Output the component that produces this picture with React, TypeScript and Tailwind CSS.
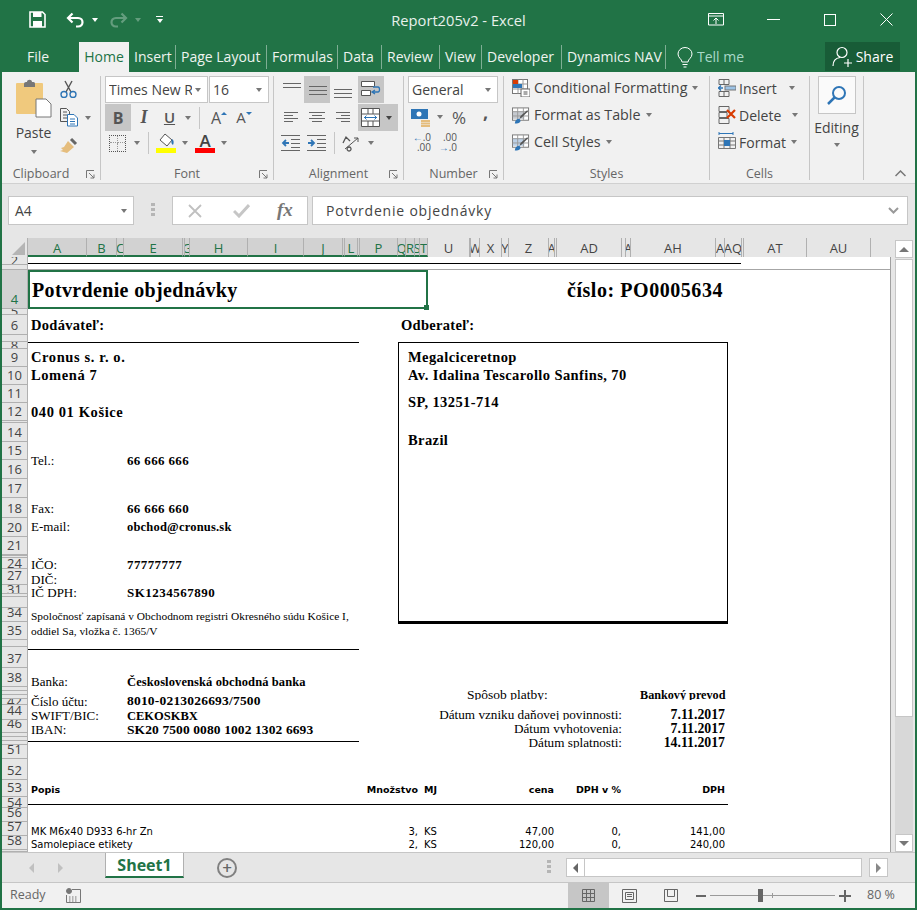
import type { ReactNode } from "react";

const columns: { label: string; w: number; sel?: boolean }[] = [
  { label: "A", w: 59, sel: true }, { label: "B", w: 30, sel: true }, { label: "C", w: 7, sel: true },
  { label: "E", w: 59, sel: true }, { label: "", w: 2, sel: true }, { label: "G", w: 5, sel: true },
  { label: "H", w: 58, sel: true }, { label: "I", w: 56, sel: true }, { label: "J", w: 39, sel: true },
  { label: "", w: 2, sel: true }, { label: "L", w: 13, sel: true }, { label: "", w: 2, sel: true },
  { label: "P", w: 38, sel: true }, { label: "Q", w: 8, sel: true }, { label: "R", w: 9, sel: true },
  { label: "S", w: 5, sel: true }, { label: "T", w: 8, sel: true },
  { label: "U", w: 42 }, { label: "", w: 1 }, { label: "W", w: 9 }, { label: "X", w: 22 }, { label: "Y", w: 7 },
  { label: "Z", w: 40 }, { label: "A", w: 6 }, { label: "", w: 2 }, { label: "AD", w: 65 }, { label: "", w: 4 },
  { label: "A", w: 5 }, { label: "AH", w: 85 }, { label: "A", w: 9 }, { label: "AQ", w: 17 }, { label: "", w: 2 },
  { label: "AT", w: 63 }, { label: "AU", w: 64 },
];

const rowHeads: { n: string; h: number; sel?: boolean }[] = [
  { n: "2", h: 8 }, { n: "", h: 5 }, { n: "4", h: 39, sel: true }, { n: "5", h: 6 }, { n: "6", h: 20 }, { n: "", h: 7 }, { n: "8", h: 7 },
  { n: "9", h: 18 }, { n: "10", h: 18 }, { n: "11", h: 18 }, { n: "12", h: 18 }, { n: "", h: 2 },
  { n: "14", h: 19 }, { n: "15", h: 18 }, { n: "16", h: 19 }, { n: "17", h: 19 }, { n: "18", h: 20 },
  { n: "20", h: 19 }, { n: "21", h: 18 }, { n: "", h: 1 }, { n: "", h: 2 }, { n: "24", h: 11 },
  { n: "27", h: 16 }, { n: "31", h: 9 }, { n: "", h: 3 }, { n: "", h: 11 }, { n: "34", h: 14 },
  { n: "35", h: 18 }, { n: "", h: 7 }, { n: "37", h: 21 }, { n: "38", h: 19 }, { n: "", h: 4 },
  { n: "", h: 4 }, { n: "", h: 4 }, { n: "42", h: 6 }, { n: "44", h: 15 }, { n: "46", h: 13 },
  { n: "", h: 4 }, { n: "", h: 4 }, { n: "", h: 4 }, { n: "51", h: 14 }, { n: "52", h: 21 },
  { n: "53", h: 17 }, { n: "54", h: 11 }, { n: "56", h: 14 }, { n: "57", h: 14 }, { n: "58", h: 14 }, { n: "", h: 2 },
];

function Caret({ className = "", dark = false }: { className?: string; dark?: boolean }) {
  return (
    <span
      className={
        "inline-block h-0 w-0 border-x-[3.5px] border-t-[4px] border-x-transparent " +
        (dark ? "border-t-[#444] " : "border-t-[#777] ") +
        className
      }
    />
  );
}

function Lines({ rows, w = 18, h = 16 }: { rows: number[][]; w?: number; h?: number }) {
  return (
    <svg width={w} height={h} viewBox={`0 0 ${w} ${h}`} stroke="#666" strokeWidth="1">
      {rows.map((r, i) => (
        <line key={i} x1={r[0]} x2={r[1]} y1={r[2] + 0.5} y2={r[2] + 0.5} />
      ))}
    </svg>
  );
}

function Group({
  label,
  launcher,
  width,
  labelClass = "",
  children,
}: {
  label: string;
  launcher?: boolean;
  width: string;
  labelClass?: string;
  children: ReactNode;
}) {
  return (
    <div className={"relative flex h-full shrink-0 flex-col border-r border-[#c6c6c6] " + width}>
      <div className="min-h-0 flex-1">{children}</div>
      <div className={"h-[15px] pt-[1px] text-center text-[12.5px] leading-[15px] text-[#666] " + labelClass}>{label}</div>
      {launcher && (
        <svg className="absolute bottom-[1px] right-[5px]" width="9" height="9" viewBox="0 0 9 9" fill="none" stroke="#777">
          <path d="M.5 8V.5H8M3 3l5 5M8 4.5V8H4.5" />
        </svg>
      )}
    </div>
  );
}

function Slot({ className = "", children }: { className?: string; children?: ReactNode }) {
  return <span className={"flex h-[27px] shrink-0 items-center justify-center " + className}>{children}</span>;
}

function SelectBox({ text, className }: { text: string; className: string }) {
  return (
    <div className={"flex h-[27px] items-center justify-between overflow-hidden border border-[#c6c6c6] bg-white pl-[3px] pr-[6px] text-[14px] text-[#444] " + className}>
      <span className="overflow-hidden whitespace-nowrap">{text}</span>
      <Caret className="ml-[3px] shrink-0" />
    </div>
  );
}

function StyleItem({ icon, text }: { icon: ReactNode; text: string }) {
  return (
    <div className="flex h-[27px] items-center pb-[3px] pl-[8px] text-[14.3px] text-[#444]">
      <span className="mr-[4px] flex w-[18px] justify-center">{icon}</span>
      {text}
      <Caret className="ml-[5px]" />
    </div>
  );
}

function CellItem({ icon, text, caretGap }: { icon: ReactNode; text: string; caretGap: string }) {
  return (
    <div className="flex h-[27px] items-center pb-[3px] pl-[8px] text-[14px] text-[#444]">
      <span className="mr-[3px] flex w-[18px] justify-center">{icon}</span>
      {text}
      <Caret className={caretGap} />
    </div>
  );
}

const tableIcon = (fill: string) => (
  <svg width="19" height="19" viewBox="0 0 19 19" fill="none">
    <rect x=".5" y="1.5" width="17" height="13" stroke="#777" fill="#fff" />
    <rect x="1" y="5" width="12" height="8" fill={fill} />
    <path d="M.5 5.5h17M.5 10h17M6 1.5v13M12 1.5v13" stroke="#999" />
    <path d="M17 5l-7 7-2 1 1-3 7-6z" fill="#555" />
    <path d="M3 18c0-3 2-5 5-5l1 2c0 2-3 3-6 3z" fill="#2e75b6" />
  </svg>
);

function TitleBar() {
  return (
    <div className="grid h-[42px] shrink-0 grid-cols-[1fr_auto_1fr] items-center text-white">
      <div className="flex items-center pb-[3px]">
        <svg className="ml-[27px]" width="17" height="17" viewBox="0 0 17 17" fill="none">
          <path d="M1 1h12.5L16 3.5V16H1z" stroke="#fff" strokeWidth="1.6" />
          <rect x="4" y="1" width="8.5" height="5" fill="#fff" />
          <rect x="4" y="10" width="9" height="6" fill="#fff" />
        </svg>
        <svg className="ml-[20px]" width="19" height="16" viewBox="0 0 19 16" fill="none" stroke="#fff" strokeWidth="2.2">
          <path d="M6.5 1.5L2 6l4.5 4.5M2 6h10c6 0 6 8.500 0 8.500h-2" />
        </svg>
        <Caret className="ml-[7px] !border-t-white" />
        <svg className="ml-[11px] opacity-30" width="19" height="16" viewBox="0 0 19 16" fill="none" stroke="#fff" strokeWidth="2.2">
          <path d="M12.500 1.500L17 6l-4.500 4.500M17 6H7c-6 0-6 8.500 0 8.500h2" />
        </svg>
        <Caret className="ml-[7px] opacity-30 !border-t-white" />
        <span className="ml-[15px] flex flex-col items-center gap-[2px]">
          <span className="h-px w-[7px] bg-white" />
          <Caret className="!border-t-white" />
        </span>
      </div>
      <div className="pb-[2px] text-[14.7px] text-[#e8f1ec]">Report205v2 - Excel</div>
      <div className="flex items-center justify-end pb-[3px]">
        <svg width="16" height="13" viewBox="0 0 16 13" fill="none" stroke="#fff">
          <path d="M.5.500h15v11.500H.5zM.5 3h15M8 11V5M5.500 7.500L8 5l2.500 2.500" />
        </svg>
        <span className="ml-[43px] h-px w-[13px] bg-white" />
        <span className="ml-[44px] h-[12px] w-[12px] border border-white" />
        <svg className="ml-[44px] mr-[22px]" width="13" height="13" viewBox="0 0 13 13" stroke="#fff">
          <path d="M.5.500l12 12M12.500.500l-12 12" />
        </svg>
      </div>
    </div>
  );
}

function TabBar() {
  const tabs: [string, string][] = [
    ["Insert", "w-[47px]"],
    ["Page Layout", "w-[91px]"],
    ["Formulas", "w-[71px]"],
    ["Data", "w-[44px]"],
    ["Review", "w-[58px]"],
    ["View", "w-[42px]"],
    ["Developer", "w-[80px]"],
    ["Dynamics NAV", "w-[104px]"],
  ];
  return (
    <div className="flex h-[30px] shrink-0 items-stretch text-[14px] text-[#eef4f0]">
      <div className="flex w-[77px] items-center pb-[1px] pl-[25px]">File</div>
      <div className="flex w-[50px] items-center justify-center bg-[#f1f1f1] pb-[1px] text-[#217346]">Home</div>
      {tabs.map(([t, w]) => (
        <div key={t} className={"my-[3px] flex items-center justify-start overflow-hidden whitespace-nowrap border-r border-[#7fae94] pb-[2px] pl-[5px] " + w}>
          {t}
        </div>
      ))}
      <svg className="ml-[11px] mt-[5px]" width="16" height="21" viewBox="0 0 16 21" fill="none" stroke="#fff">
        <path d="M5 15c0-3-4-4-4-8a7 6.500 0 0 1 14 0c0 4-4 5-4 8zM5.500 17.500h5M6.500 20h3" />
      </svg>
      <div className="ml-[4px] flex w-[48px] items-center overflow-hidden whitespace-nowrap pb-[1px] text-[#a9d9c9]">Tell me</div>
      <div className="ml-[80px] flex h-[29px] w-[75px] items-center justify-center gap-[3px] bg-[#185c37] text-white">
        <svg width="21" height="21" viewBox="0 0 21 21" fill="none" stroke="#fff" strokeWidth="1.2">
          <circle cx="10" cy="6.500" r="5" />
          <path d="M1 20c0-5 3-8 7-8.500M12 17h8M16 13v8" />
        </svg>
        Share
      </div>
    </div>
  );
}

function Ribbon() {
  return (
    <div className="flex h-[112px] shrink-0 border-b border-[#d0d0d0] bg-[#f1f1f1] pb-[3px] pt-[4px] font-['Open_Sans',sans-serif]">
      <Group label="Clipboard" launcher width="w-[99px]" labelClass="pr-[20px]">
        <div className="flex h-full">
          <div className="flex w-[58px] shrink-0 flex-col items-center pl-[5px]">
            <svg className="mt-[3px] shrink-0" width="36" height="39" viewBox="0 0 36 39" fill="none">
              <rect x="0" y="4" width="27" height="31" rx="1" fill="#f0c97d" />
              <path d="M8 5c0-2 2-2 3-2 0-3 5-3 5 0 2 0 3 0 3 2v3H8z" fill="#777" />
              <path d="M20 20h10l5 5v13H20z" fill="#fff" stroke="#777" />
            </svg>
            <span className="mt-[6px] text-[14px] leading-[18px] text-[#444]">Paste</span>
            <Caret className="mt-[8px]" />
          </div>
          <div className="flex shrink-0 flex-col items-start pt-[4px]">
            <svg width="17" height="18" viewBox="0 0 17 18" fill="none" stroke="#555">
              <path d="M5 1l6 11M12 1L6 12" strokeWidth="1.4" />
              <circle cx="4" cy="14.500" r="3" stroke="#2e75b6" strokeWidth="1.4" />
              <circle cx="13" cy="14.500" r="3" stroke="#2e75b6" strokeWidth="1.4" />
            </svg>
            <div className="mt-[10px] flex items-center">
              <svg width="18" height="19" viewBox="0 0 18 19" fill="none" stroke="#555">
                <path d="M.5.500h6l3 3v10h-9zM3 4h4M3 7h4M3 10h4" />
                <path d="M7.500 6.500H14l3.500 3.500v8h-10z" fill="#fff" stroke="#2e75b6" />
                <path d="M10 11h5M10 13.500h5M10 16h5" stroke="#2e75b6" />
              </svg>
              <Caret className="ml-[7px]" />
            </div>
            <svg className="mt-[10px]" width="18" height="17" viewBox="0 0 18 17" fill="none">
              <path d="M11 2l5 5" stroke="#666" strokeWidth="3" />
              <path d="M8 4l6 6-7 6-7-2 3-1-2-2 3-1z" fill="#e5bd7d" />
            </svg>
          </div>
        </div>
      </Group>

      <Group label="Font" launcher width="w-[173px]">
        <div className="flex gap-[1px] pl-[4px] font-['Open_Sans',sans-serif]">
          <SelectBox text="Times New R" className="w-[103px]" />
          <SelectBox text="16" className="w-[60px]" />
        </div>
        <div className="flex items-center pl-[4px] pt-[1px] text-[#555]">
          <Slot className="w-[26px] bg-[#c6c6c6] text-[16px] font-bold">B</Slot>
          <Slot className="w-[26px] font-['Liberation_Serif',serif] text-[18px] font-bold italic">I</Slot>
          <Slot className="w-[25px] text-[15px] font-semibold underline">U</Slot>
          <Caret className="ml-[3px]" />
          <span className="ml-[8px] h-[22px] w-px bg-[#c6c6c6]" />
          <Slot className="ml-[9px] w-[20px] text-[16px]">
            A<span className="mb-[9px] h-0 w-0 border-x-[3px] border-b-[3px] border-x-transparent border-b-[#2e75b6]" />
          </Slot>
          <Slot className="ml-[5px] w-[20px] text-[15px]">
            A<span className="mb-[9px] h-0 w-0 border-x-[3px] border-t-[3px] border-x-transparent border-t-[#2e75b6]" />
          </Slot>
        </div>
        <div className="flex h-[20px] items-center pl-[8px] pt-[4px]">
          <span className="grid h-[17px] w-[17px] grid-cols-2 grid-rows-2 border border-dotted border-[#555]">
            <span className="border-b border-r border-dotted border-[#999]" />
            <span className="border-b border-dotted border-[#999]" />
            <span className="border-r border-dotted border-[#999]" />
          </span>
          <Caret className="ml-[8px]" />
          <span className="ml-[8px] h-[22px] w-px bg-[#c6c6c6]" />
          <span className="ml-[7px] flex w-[20px] flex-col items-center">
            <svg width="18" height="15" viewBox="0 0 18 15" fill="none">
              <path d="M8 1l7 6-5 6-7-6z" stroke="#555" fill="#fff" />
              <path d="M15 6c2 1 2 4 1 6-2-1-2-4-1-6z" fill="#2e75b6" />
            </svg>
            <span className="h-[5px] w-[20px] bg-[#ffff00]" />
          </span>
          <Caret className="ml-[6px]" />
          <span className="ml-[7px] flex w-[20px] flex-col items-center">
            <span className="h-[15px] text-[17px] font-semibold leading-[15px] text-[#444]">A</span>
            <span className="h-[5px] w-[20px] bg-[#ff0000]" />
          </span>
          <Caret className="ml-[6px]" />
        </div>
      </Group>

      <Group label="Alignment" launcher width="w-[130px]">
        <div className="flex pl-[4px]">
          <Slot className="w-[26px]"><Lines w={19} h={18} rows={[[1, 19, 2], [1, 19, 6]]} /></Slot>
          <Slot className="w-[26px] bg-[#c6c6c6]"><Lines w={19} h={18} rows={[[1, 19, 5], [1, 19, 9], [1, 19, 13]]} /></Slot>
          <Slot className="w-[25px]"><Lines w={19} h={18} rows={[[1, 19, 8], [1, 19, 12], [1, 19, 16]]} /></Slot>
          <Slot className="ml-[3px] w-[26px] bg-[#c6c6c6]">
            <svg width="20" height="19" viewBox="0 0 20 19" fill="none">
              <path d="M.5 1.500h13v5h-13zM.5 10.500h9v5h-9z" fill="#fff" stroke="#555" />
              <path d="M12 7h5c2 0 2 5 0 5h-5M14 10l-3 2 3 2" stroke="#2e75b6" strokeWidth="1.3" />
            </svg>
          </Slot>
        </div>
        <div className="flex pl-[4px] pt-[1px]">
          <Slot className="w-[26px]"><Lines w={15} h={13} rows={[[0, 14, 1], [0, 9, 4], [0, 14, 7], [0, 9, 10]]} /></Slot>
          <Slot className="w-[26px]"><Lines w={16} h={13} rows={[[0, 16, 1], [3, 13, 4], [0, 16, 7], [3, 13, 10]]} /></Slot>
          <Slot className="w-[25px]"><Lines w={15} h={13} rows={[[1, 15, 1], [6, 15, 4], [1, 15, 7], [6, 15, 10]]} /></Slot>
          <Slot className="ml-[3px] w-[40px] justify-start bg-[#c6c6c6] pl-[3px]">
            <svg width="19" height="19" viewBox="0 0 19 19" fill="none">
              <path d="M.5.500h18v18H.5z" fill="#fff" stroke="#555" />
              <path d="M.5 6h18M.5 13h18M7 .500V6M12 .500V6M7 13v5M12 13v5" stroke="#555" />
              <path d="M3 9.500h13M5.500 7.500l-2 2 2 2M13.500 7.500l2 2-2 2" stroke="#2e75b6" />
            </svg>
            <Caret dark className="ml-[6px]" />
          </Slot>
        </div>
        <div className="flex h-[20px] items-center pl-[7px] pt-[4px]">
          <svg width="19" height="16" viewBox="0 0 19 16" fill="none">
            <path d="M0 .500h19M10 4.500h9M10 8.500h9M10 12.500h9M0 15.500h19" stroke="#666" />
            <path d="M8 8H2M5 5L2 8l3 3" stroke="#2e75b6" strokeWidth="1.8" />
          </svg>
          <svg className="ml-[7px]" width="19" height="16" viewBox="0 0 19 16" fill="none">
            <path d="M0 .500h19M10 4.500h9M10 8.500h9M10 12.500h9M0 15.500h19" stroke="#666" />
            <path d="M1 8h6M4 5l3 3-3 3" stroke="#2e75b6" strokeWidth="1.8" />
          </svg>
          <span className="ml-[8px] h-[22px] w-px bg-[#c6c6c6]" />
          <svg className="ml-[7px]" width="19" height="17" viewBox="0 0 19 17" fill="none" stroke="#555">
            <path d="M3 14L16 3M12 3h4v4" />
            <path d="M1 8l3-6 4 4M7 12a2 2 0 1 0 .1 0z" strokeWidth="1.3" />
          </svg>
          <Caret className="ml-[7px]" />
        </div>
      </Group>

      <Group label="Number" launcher width="w-[100px]">
        <div className="pl-[4px]">
          <SelectBox text="General" className="w-[90px]" />
        </div>
        <div className="flex h-[27px] items-center pl-[7px] pt-[1px] text-[#555]">
          <svg width="20" height="19" viewBox="0 0 20 19" fill="none">
            <rect x="0" y="1" width="17" height="10" fill="#2e75b6" />
            <circle cx="8" cy="6" r="2.500" fill="#fff" />
            <path d="M10 13h9M10 15.500h9M10 18h9" stroke="#e5bd7d" strokeWidth="2" />
          </svg>
          <Caret className="ml-[6px]" />
          <span className="ml-[9px] text-[17px] leading-none">%</span>
          <span className="mb-[10px] ml-[17px] text-[18px] font-bold leading-none">,</span>
        </div>
        <div className="flex h-[20px] items-center gap-[8px] pl-[9px] pt-[4px] text-[10px] leading-[10px] text-[#555]">
          <span className="flex w-[18px] flex-col items-end">
            <span><span className="font-bold text-[#2e75b6]">←</span>.0</span>
            <span>.00</span>
          </span>
          <span className="flex w-[18px] flex-col items-end">
            <span>.00</span>
            <span><span className="font-bold text-[#2e75b6]">→</span>.0</span>
          </span>
        </div>
      </Group>

      <Group label="Styles" width="w-[206px]">
        <StyleItem
          text="Conditional Formatting"
          icon={
            <svg width="18" height="18" viewBox="0 0 18 18" fill="none">
              <rect x=".5" y=".500" width="15" height="14" stroke="#777" fill="#fff" />
              <path d="M.5 5h15M.5 10h15M6 .500v14M11 .500v14" stroke="#999" />
              <rect x="1" y="1" width="5" height="4" fill="#d83b01" />
              <rect x="1" y="5" width="9" height="4" fill="#2e75b6" />
              <rect x="9" y="10" width="9" height="8" fill="#fff" stroke="#666" />
              <path d="M11.500 13h4M11.500 15h4" stroke="#555" />
            </svg>
          }
        />
        <StyleItem text="Format as Table" icon={tableIcon("#c5c9cf")} />
        <StyleItem text="Cell Styles" icon={tableIcon("#bcd0e6")} />
      </Group>

      <Group label="Cells" width="w-[100px]">
        <CellItem
          text="Insert"
          caretGap="ml-[12px]"
          icon={
            <svg width="18" height="18" viewBox="0 0 18 18" fill="none" stroke="#666">
              <path d="M1 .500h10v5H1zM1 12.500h10v5H1zM6 .500v5M6 12.500v5" />
              <rect x="7" y="7" width="11" height="4" fill="#9dc3e6" stroke="#777" />
              <path d="M5 9H0M3 6.500L.5 9 3 11.500" stroke="#2e75b6" strokeWidth="1.3" />
            </svg>
          }
        />
        <CellItem
          text="Delete"
          caretGap="ml-[11px]"
          icon={
            <svg width="18" height="18" viewBox="0 0 18 18" fill="none" stroke="#666">
              <path d="M1 .500h10v5H1zM1 12.500h10v5H1zM1 6.500h8v5H1z" />
              <path d="M9 4l8 8M17 4l-8 8" stroke="#d83b01" strokeWidth="2.200" />
            </svg>
          }
        />
        <CellItem
          text="Format"
          caretGap="ml-[5px]"
          icon={
            <svg width="18" height="20" viewBox="0 0 18 20" fill="none">
              <path d="M1 1.500h14M1 0v3M15 0v3" stroke="#2e75b6" />
              <path d="M.5 5.500h17v11H.5zM.5 9h17M.5 13h17M6 5.500v11M12 5.500v11" stroke="#777" />
              <rect x="6" y="8" width="6" height="6" fill="#2e75b6" />
            </svg>
          }
        />
      </Group>

      <Group label="" width="w-[54px]">
        <div className="flex flex-col items-center">
          <div className="flex h-[38px] w-[38px] items-center justify-center border border-[#c6c6c6] bg-[#fafafa]">
            <svg width="21" height="21" viewBox="0 0 21 21" fill="none" stroke="#2e75b6" strokeWidth="2">
              <circle cx="13" cy="8" r="6" />
              <path d="M8.500 12.500L2 19" strokeWidth="2.500" />
            </svg>
          </div>
          <span className="mt-[5px] text-[14px] leading-[18px] text-[#444]">Editing</span>
          <Caret className="mt-[6px]" />
        </div>
      </Group>

      <div className="flex flex-1 items-end justify-end pb-[3px] pr-[9px]">
        <svg width="11" height="7" viewBox="0 0 11 7" fill="none" stroke="#777" strokeWidth="1.500">
          <path d="M.5 6l5-5 5 5" />
        </svg>
      </div>
    </div>
  );
}

function FormulaBar() {
  return (
    <div className="flex h-[54px] shrink-0 items-start bg-[#e6e6e6] pt-[12px] font-['Open_Sans',sans-serif]">
      <div className="ml-[6px] flex h-[29px] w-[126px] items-center justify-between border border-[#c6c6c6] bg-white pl-[6px] pr-[6px] text-[14px] text-[#444]">
        A4
        <Caret />
      </div>
      <div className="ml-[17px] mt-[7px] flex flex-col gap-[2px]">
        <span className="h-[3px] w-[4px] bg-[#b5b5b5]" />
        <span className="h-[3px] w-[4px] bg-[#b5b5b5]" />
        <span className="h-[3px] w-[4px] bg-[#b5b5b5]" />
      </div>
      <div className="ml-[17px] flex h-[29px] w-[136px] items-center border border-[#c6c6c6] bg-white">
        <svg className="ml-[15px]" width="14" height="14" viewBox="0 0 14 14" stroke="#c0c0c0" strokeWidth="1.800">
          <path d="M1 1l12 12M13 1L1 13" />
        </svg>
        <svg className="ml-[31px]" width="17" height="14" viewBox="0 0 17 14" fill="none" stroke="#c6c6c6" strokeWidth="3">
          <path d="M1 7l5 5L16 1" />
        </svg>
        <span className="ml-[27px] font-['Liberation_Serif',serif] text-[19px] font-bold italic text-[#777]">fx</span>
      </div>
      <div className="ml-[4px] flex h-[29px] w-[596px] items-center justify-between border border-[#c6c6c6] bg-white pl-[13px] pr-[8px] text-[14px] text-[#444]">
        <span className="tracking-[0.8px]">Potvrdenie objednávky</span>
        <svg width="11" height="7" viewBox="0 0 11 7" fill="none" stroke="#999" strokeWidth="2">
          <path d="M1 1l4.500 4.500L10 1" />
        </svg>
      </div>
    </div>
  );
}

function ColumnHeaders() {
  return (
    <div className="flex h-[19px] shrink-0 items-stretch text-[13px] font-['Open_Sans',sans-serif] leading-[19px]">
      <div className="relative w-[26px] shrink-0 border-r border-[#b0b0b0]">
        <span className="absolute bottom-[2px] right-[2px] h-0 w-0 border-b-[13px] border-l-[13px] border-b-[#b5b5b5] border-l-transparent" />
      </div>
      {columns.map((c, i) => (
        <div
          key={i}
          style={{ width: c.w }}
          className={
            "flex shrink-0 justify-center overflow-hidden whitespace-nowrap border-r border-[#b0b0b0] pt-[1px] " +
            (c.sel ? "border-b-2 border-b-[#217346] bg-[#d2d2d2] text-[#217346]" : "text-[#444]")
          }
        >
          {c.label}
        </div>
      ))}
    </div>
  );
}

function RowHeaders() {
  return (
    <div className="w-[26px] shrink-0 font-['Open_Sans',sans-serif] text-[13px] text-[#444]">
      {rowHeads.map((r, i) => (
        <div
          key={i}
          style={{ height: r.h }}
          className={
            "flex justify-center overflow-hidden border-b border-r border-[#b0b0b0] leading-[17px] " +
            (r.h > 12 ? "items-end " : "items-center ") +
            (r.sel ? "bg-[#d2d2d2] text-[#217346]" : "bg-[#e6e6e6]")
          }
        >
          {r.n}
        </div>
      ))}
    </div>
  );
}

function Field({ h, label, value, valueClass = "text-[13px] tracking-[0.35px]" }: { h: string; label: string; value?: string; valueClass?: string }) {
  return (
    <div className={"flex items-center whitespace-nowrap pl-[3px] text-[13px] " + h}>
      <span className="w-[96px] shrink-0">{label}</span>
      {value && <span className={"font-bold " + valueClass}>{value}</span>}
    </div>
  );
}

function DateRow({ label, value }: { label: string; value: string }) {
  return (
    <div className="flex h-[13px] items-baseline justify-end overflow-hidden whitespace-nowrap leading-[15px]">
      <span className="text-[13.2px]">{label}</span>
      <span className="w-[103px] text-right text-[13.8px] font-bold">{value}</span>
    </div>
  );
}

function Document() {
  return (
    <div className="h-[595px] w-[863px] shrink-0 overflow-hidden border-r border-[#a0a0a0] bg-white font-['Liberation_Serif',serif] text-black">
      <div className="mt-[6px] h-px w-[713px] bg-black" />
      <div className="mt-[5px] h-px bg-[#a6a6a6]" />

      <div className="flex h-[39px]">
        <div className="relative flex w-[400px] items-center border-2 border-[#217346] pl-[2px] text-[20px] font-bold tracking-[0.35px]">
          Potvrdenie objednávky
          <span className="absolute -bottom-[3px] -right-[3px] h-[5px] w-[5px] bg-[#217346]" />
        </div>
        <div className="flex w-[295px] items-center justify-end text-[20px] font-bold tracking-[0.55px]">číslo: PO0005634</div>
      </div>

      <div className="mt-[7px] flex h-[20px] items-center text-[14.5px] font-bold tracking-[0.3px]">
        <span className="w-[373px] pl-[3px]">Dodávateľ:</span>
        <span>Odberateľ:</span>
      </div>

      <div className="mt-[6px] flex h-[438px]">
        <div className="w-[370px] shrink-0">
          <div className="h-px w-[331px] bg-black" />
          <div className="mt-[6px] pl-[3px] text-[14.5px] font-bold tracking-[0.6px]">
            <div className="flex h-[18px] items-center">Cronus s. r. o.</div>
            <div className="flex h-[18px] items-center">Lomená 7</div>
            <div className="mt-[19px] flex h-[18px] items-center">040 01 Košice</div>
          </div>
          <Field h="mt-[30px] h-[18px]" label="Tel.:" value="66 666 666" />
          <Field h="mt-[30px] h-[18px]" label="Fax:" value="66 666 660" />
          <Field h="h-[18px]" label="E-mail:" value="obchod@cronus.sk" valueClass="text-[12.5px] tracking-[0.2px]" />
          <Field h="mt-[21px] h-[16px]" label="IČO:" value="77777777" valueClass="text-[13px] tracking-[0.4px]" />
          <Field h="h-[13px]" label="DIČ:" />
          <Field h="h-[14px]" label="IČ DPH:" value="SK1234567890" valueClass="text-[13px] tracking-[0.5px]" />
          <div className="mt-[9px] pl-[3px] text-[11.4px] leading-[15px]">
            <div className="whitespace-nowrap">Spoločnosť zapísaná v Obchodnom registri Okresného súdu Košice I,</div>
            <div className="whitespace-nowrap">oddiel Sa, vložka č. 1365/V</div>
          </div>
          <div className="mt-[10px] h-px w-[331px] bg-black" />
          <Field h="mt-[23px] h-[18px]" label="Banka:" value="Československá obchodná banka" valueClass="text-[12.5px] tracking-[0.1px]" />
          <Field h="mt-[3px] h-[15px]" label="Číslo účtu:" value="8010-0213026693/7500" valueClass="text-[13.5px] tracking-[0.2px]" />
          <Field h="h-[14px]" label="SWIFT/BIC:" value="CEKOSKBX" valueClass="text-[12.5px]" />
          <Field h="h-[14px]" label="IBAN:" value="SK20 7500 0080 1002 1302 6693" valueClass="text-[13.5px] tracking-[0.1px]" />
          <div className="mt-[4px] h-px w-[331px] bg-black" />
        </div>

        <div className="w-[330px] shrink-0">
          <div className="h-[282px] border-x border-b-[3px] border-t border-black pl-[9px] pt-[6px] text-[14.5px] font-bold tracking-[0.4px]">
            <div className="flex h-[18px] items-center">Megalciceretnop</div>
            <div className="flex h-[18px] items-center">Av. Idalina Tescarollo Sanfins, 70</div>
            <div className="mt-[9px] flex h-[18px] items-center">SP, 13251-714</div>
            <div className="mt-[20px] flex h-[18px] items-center">Brazil</div>
          </div>
          <div className="mt-[63px] flex h-[13px] items-baseline overflow-hidden whitespace-nowrap pl-[69px] leading-[15px]">
            <span className="w-[173px] text-[13.5px]">Spôsob platby:</span>
            <span className="text-[12.2px] font-bold">Bankový prevod</span>
          </div>
          <div className="mt-[7px] flex flex-col gap-[1px] pr-[3px]">
            <DateRow label="Dátum vzniku daňovej povinnosti:" value="7.11.2017" />
            <DateRow label="Dátum vyhotovenia:" value="7.11.2017" />
            <DateRow label="Dátum splatnosti:" value="14.11.2017" />
          </div>
        </div>
      </div>

      <div className="flex h-[20px] items-center font-['DejaVu_Sans',sans-serif] text-[9.5px] font-bold">
        <span className="w-[300px] pl-[3px]">Popis</span>
        <span className="w-[90px] text-right">Množstvo</span>
        <span className="w-[40px] pl-[6px]">MJ</span>
        <span className="w-[96px] text-right">cena</span>
        <span className="w-[67px] text-right">DPH v %</span>
        <span className="w-[104px] text-right">DPH</span>
      </div>
      <div className="mt-[4px] h-px w-[700px] bg-black" />
      <div className="mt-[20px] font-['DejaVu_Sans',sans-serif] text-[10px] leading-[13px]">
        <div className="flex">
          <span className="w-[300px] whitespace-nowrap pl-[3px]">MK M6x40 D933 6-hr Zn</span>
          <span className="w-[90px] text-right">3,</span>
          <span className="w-[40px] pl-[6px]">KS</span>
          <span className="w-[96px] text-right">47,00</span>
          <span className="w-[67px] text-right">0,</span>
          <span className="w-[104px] text-right">141,00</span>
        </div>
        <div className="flex">
          <span className="w-[300px] whitespace-nowrap pl-[3px]">Samolepiace etikety</span>
          <span className="w-[90px] text-right">2,</span>
          <span className="w-[40px] pl-[6px]">KS</span>
          <span className="w-[96px] text-right">120,00</span>
          <span className="w-[67px] text-right">0,</span>
          <span className="w-[104px] text-right">240,00</span>
        </div>
      </div>
    </div>
  );
}

function ScrollButton({ dir }: { dir: "up" | "down" }) {
  return (
    <div className="flex h-[18px] w-[18px] shrink-0 items-center justify-center border border-[#c6c6c6] bg-white">
      <span
        className={
          "h-0 w-0 border-x-[5px] border-x-transparent " +
          (dir === "up" ? "border-b-[5px] border-b-[#777]" : "border-t-[5px] border-t-[#777]")
        }
      />
    </div>
  );
}

function SheetArea() {
  return (
    <div className="flex h-[614px] shrink-0 bg-[#e6e6e6]">
      <div className="w-[893px] shrink-0">
        <ColumnHeaders />
        <div className="flex">
          <RowHeaders />
          <Document />
        </div>
      </div>
      <div className="flex w-[18px] flex-col pt-[2px]">
        <ScrollButton dir="up" />
        <div className="mt-[1px] h-[458px] shrink-0 border border-[#c6c6c6] bg-white" />
        <div className="flex-1 bg-[#d8d8d8]" />
        <ScrollButton dir="down" />
      </div>
    </div>
  );
}

function SheetTabs() {
  return (
    <div className="flex h-[30px] shrink-0 border-t border-[#c6c6c6] bg-[#e6e6e6] font-['Open_Sans',sans-serif]">
      <div className="flex h-full items-center pl-[27px]">
        <span className="h-0 w-0 border-y-[5px] border-r-[5px] border-y-transparent border-r-[#c0c0c0]" />
        <span className="ml-[24px] h-0 w-0 border-y-[5px] border-l-[5px] border-y-transparent border-l-[#c0c0c0]" />
      </div>
      <div className="ml-[42px] flex h-[25px] w-[79px] items-center justify-center border-b-2 border-x border-b-[#217346] border-x-[#b0b0b0] bg-white text-[16px] font-bold text-[#217346]">
        Sheet1
      </div>
      <div className="ml-[33px] mt-[5px] flex h-[20px] w-[20px] items-center justify-center rounded-full border-2 border-[#808080] pb-[2px] text-[17px] font-semibold leading-none text-[#666]">
        +
      </div>
      <div className="ml-[310px] mt-[7px] flex flex-col gap-[2px]">
        <span className="h-[3px] w-[4px] bg-[#b5b5b5]" />
        <span className="h-[3px] w-[4px] bg-[#b5b5b5]" />
        <span className="h-[3px] w-[4px] bg-[#b5b5b5]" />
      </div>
      <div className="ml-[15px] mt-[5px] flex h-[19px] w-[322px] items-stretch">
        <div className="flex w-[19px] items-center justify-center border border-[#c6c6c6] bg-white">
          <span className="h-0 w-0 border-y-[5px] border-r-[5px] border-y-transparent border-r-[#666]" />
        </div>
        <div className="w-[277px] border-y border-r border-[#c6c6c6] bg-white" />
        <div className="ml-[7px] flex w-[19px] items-center justify-center border border-[#c6c6c6] bg-white">
          <span className="h-0 w-0 border-y-[5px] border-l-[5px] border-y-transparent border-l-[#888]" />
        </div>
      </div>
    </div>
  );
}

function StatusBar() {
  return (
    <div className="flex h-[26px] shrink-0 items-stretch border-t border-[#c6c6c6] bg-[#f1f1f1] font-['Open_Sans',sans-serif] text-[12.5px] text-[#666]">
      <span className="flex w-[44px] items-center pl-[8px]">Ready</span>
      <svg className="ml-[20px] mt-[5px]" width="15" height="15" viewBox="0 0 15 15" fill="none" stroke="#777">
        <circle cx="3" cy="3" r="2.500" fill="#777" />
        <path d="M6 1.500h8.500v13H.5V7" />
        <path d="M3 9h9M3 11h9M3 13h9" strokeDasharray="1.500 1.500" />
      </svg>
      <div className="ml-[487px] flex w-[41px] items-center justify-center bg-[#c6c6c6]">
        <svg width="13" height="13" viewBox="0 0 13 13" fill="none" stroke="#666">
          <path d="M.5.500h12v12H.5zM4.500.500v12M8.500.500v12M.5 4.500h12M.5 8.500h12" />
        </svg>
      </div>
      <div className="ml-[13px] flex items-center">
        <svg width="15" height="14" viewBox="0 0 15 14" fill="none" stroke="#666">
          <path d="M.5.500h14v13H.5zM3.500 3.500h8v7h-8zM5 5.500h5M5 7.500h5" />
        </svg>
      </div>
      <div className="ml-[27px] flex items-center">
        <svg width="14" height="13" viewBox="0 0 14 13" fill="none" stroke="#666">
          <path d="M.5.500h13v12H.5zM3.500.500v7h7v-7" />
        </svg>
      </div>
      <div className="ml-[18px] flex items-center">
        <span className="h-[2px] w-[10px] bg-[#666]" />
        <div className="ml-[4px] flex h-px w-[125px] items-center bg-[#9a9a9a]">
          <span className="ml-[48px] h-[13px] w-[5px] shrink-0 bg-[#666]" />
          <span className="ml-[9px] h-[5px] w-px shrink-0 bg-[#9a9a9a]" />
        </div>
        <span className="ml-[4px] flex h-[12px] w-[12px] items-center justify-center">
          <span className="flex h-[2px] w-[12px] items-center justify-center bg-[#666]">
            <span className="h-[12px] w-[2px] shrink-0 bg-[#666]" />
          </span>
        </span>
      </div>
      <span className="ml-[16px] flex items-center whitespace-nowrap">80 %</span>
    </div>
  );
}

export default function App() {
  return (
    <div className="flex h-[910px] w-[917px] flex-col overflow-hidden bg-[#217346] px-[2px] pb-[2px] font-['Open_Sans',sans-serif]">
      <TitleBar />
      <TabBar />
      <Ribbon />
      <FormulaBar />
      <SheetArea />
      <SheetTabs />
      <StatusBar />
    </div>
  );
}
